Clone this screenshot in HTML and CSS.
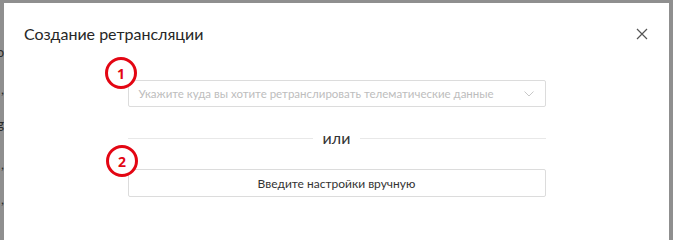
FILE: index.html
```html
<!DOCTYPE html>
<html lang="ru">
<head>
<meta charset="utf-8">
<link rel="stylesheet" href="styles.css">
</head>
<body>
<div class="backdrop">
  <div class="side-left">
    <span class="frag f1">o</span>
    <span class="frag f2">,</span>
    <span class="frag f3">g</span>
    <span class="frag f4">,</span>
    <span class="frag f5">,</span>
  </div>
  <div class="modal">
    <div class="header">
      <div class="title">Создание ретрансляции</div>
      <button class="close" aria-label="close">
        <svg width="12" height="12" viewBox="0 0 12 12"><path d="M1 1L11 11M11 1L1 11" stroke="#555" stroke-width="1.2" fill="none"/></svg>
      </button>
    </div>
    <div class="body">
      <div class="content">
        <div class="select">
          <span class="placeholder">Укажите куда вы хотите ретранслировать телематические данные</span>
          <svg class="chev" width="10" height="6" viewBox="0 0 10 6"><path d="M0.5 0.5L5 5L9.5 0.5" stroke="#c8c8c8" stroke-width="1" fill="none"/></svg>
        </div>
        <div class="divider">
          <span class="line"></span>
          <span class="or">или</span>
          <span class="line"></span>
        </div>
        <button class="manual">Введите настройки вручную</button>
      </div>
    </div>
  </div>
  <div class="side-right"></div>
  <span class="badge b1">1</span>
  <span class="badge b2">2</span>
</div>
</body>
</html>
```
FILE: styles.css
```css
html, body {
  margin: 0;
  padding: 0;
  height: 100%;
  overflow: hidden;
}
body {
  background: #8f8f8f;
  font-family: "Lato", "Open Sans", sans-serif;
}
.backdrop {
  position: relative;
  display: flex;
  padding-top: 3px;
  min-height: 100vh;
  box-sizing: border-box;
}
.side-left {
  width: 4px;
  position: relative;
  overflow: hidden;
}
.frag {
  position: absolute;
  right: 0;
  font-size: 13px;
  color: #2a2a2a;
  line-height: 1;
}
.f1 { top: 43px; }
.f2 { top: 80px; }
.f3 { top: 115px; }
.f4 { top: 155px; }
.f5 { top: 190px; }
.side-right {
  flex: 1;
}
.modal {
  width: 665px;
  background: #fff;
}
.header {
  display: flex;
  justify-content: space-between;
  align-items: center;
  padding: 19px 21px 0 20px;
  height: 24px;
}
.title {
  font-size: 16px;
  color: #262626;
  line-height: 24px;
}
.close {
  border: none;
  background: none;
  padding: 0;
  width: 12px;
  height: 12px;
  display: flex;
}
.body {
  display: flex;
  justify-content: center;
  padding-top: 34px;
}
.content {
  width: 418px;
  display: flex;
  flex-direction: column;
}
.select {
  height: 27px;
  box-sizing: border-box;
  border: 1px solid #dcdcdc;
  border-radius: 2px;
  display: flex;
  align-items: center;
  justify-content: space-between;
  padding: 0 11px 0 10px;
}
.placeholder {
  font-size: 11.5px;
  color: #bdbdbd;
  white-space: nowrap;
}
.divider {
  display: flex;
  align-items: center;
  margin-top: 20px;
  height: 22px;
}
.line {
  flex: 1;
  height: 1px;
  background: #e8e8e8;
}
.or {
  font-size: 16px;
  color: #333;
  padding: 0 10px;
  line-height: 22px;
}
.manual {
  margin-top: 20px;
  height: 28px;
  border: 1px solid #dcdcdc;
  border-radius: 2px;
  background: #fff;
  font-family: inherit;
  font-size: 12px;
  color: #333;
  padding: 0;
}
.badge {
  position: absolute;
  width: 26px;
  height: 26px;
  border: 3px solid #e30613;
  border-radius: 50%;
  background: #fff;
  color: #e30613;
  font-size: 14px;
  font-weight: bold;
  display: flex;
  align-items: center;
  justify-content: center;
  font-family: "Open Sans", sans-serif;
}
.b1 { left: 105px; top: 57px; }
.b2 { left: 106px; top: 145px; }
```
